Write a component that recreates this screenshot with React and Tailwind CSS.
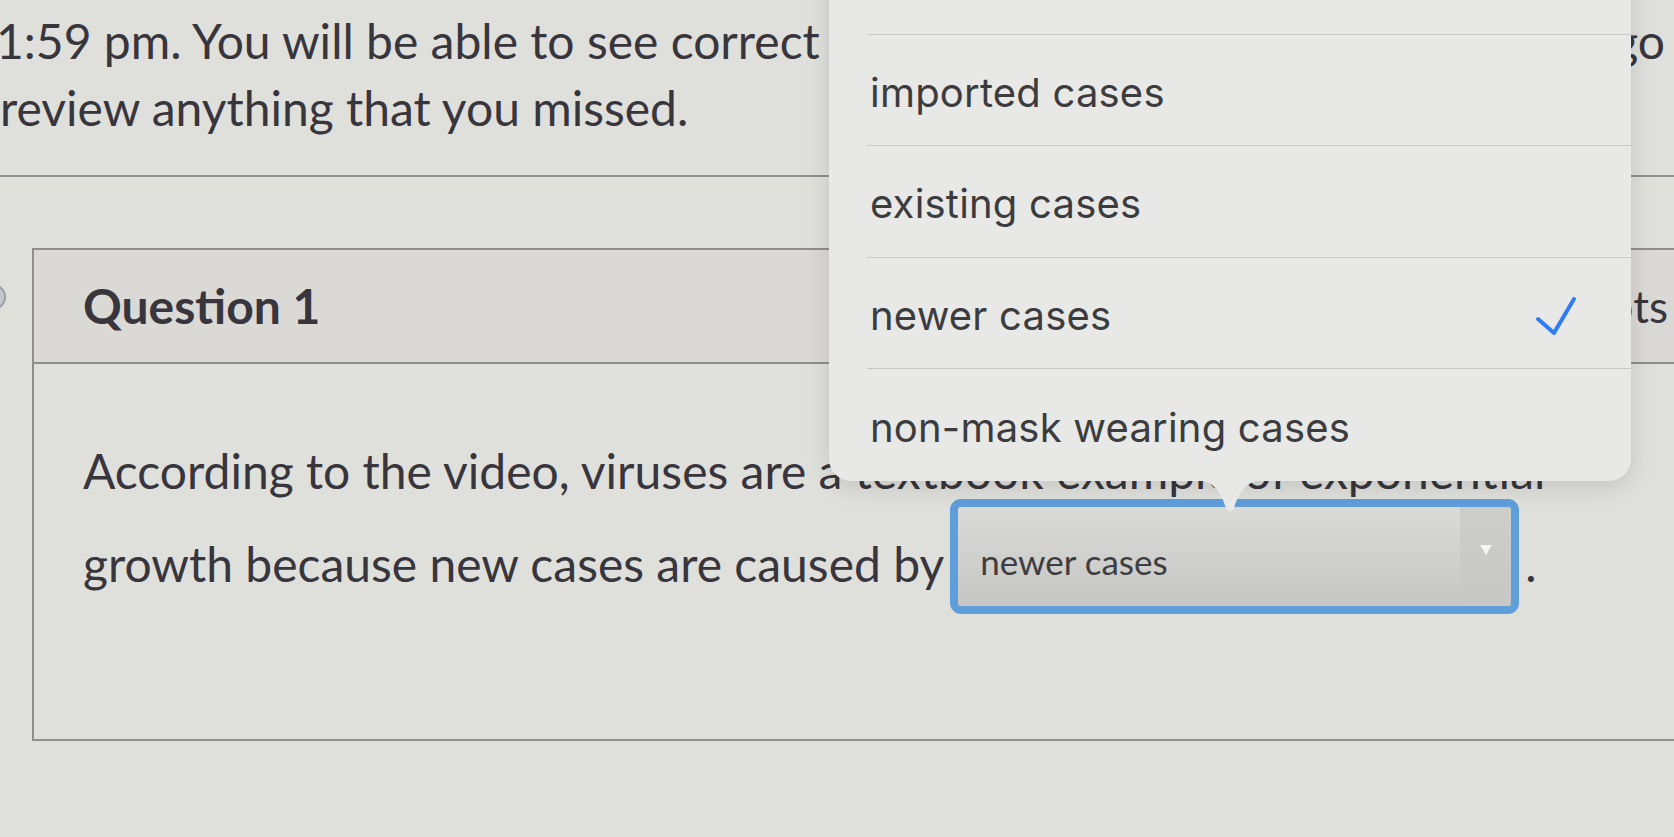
import React from "react";

const options = ["[ Select ]", "imported cases", "existing cases", "newer cases", "non-mask wearing cases"];

function Check() {
  return (
    <svg width="44" height="40" viewBox="0 0 44 40" fill="none">
      <path d="M4 23 L20 37 L40 3" stroke="#2f7cf6" strokeWidth="4" strokeLinecap="round" strokeLinejoin="round" />
    </svg>
  );
}

function Popover({ selected }) {
  return (
    <div className="absolute left-[829px] top-[-77px] w-[802px] font-['Inter',sans-serif]">
      <div className="rounded-[22px] bg-[#e8e8e6] shadow-[0_6px_24px_rgba(0,0,0,0.12)]">
        {options.map((opt, i) => (
          <div key={opt} className="h-[111.5px] pl-[38px]">
            <div
              className={
                "flex h-full items-center justify-between pl-[3px] pr-[53px] pt-[6px] " +
                (i < options.length - 1 ? "border-b border-[#c8c8c6]" : "")
              }
            >
              <span className="text-[40px] tracking-[0.2px] text-[#3c3c3e]">{opt}</span>
              {opt === selected && <Check />}
            </div>
          </div>
        ))}
      </div>
      {/* arrow pointing to the select */}
      <svg className="ml-[366px] -mt-[1px]" width="70" height="34" viewBox="0 0 70 34">
        <path d="M0 0 C15 0 25 8 31 28 Q35 35 39 28 C45 8 55 0 70 0 Z" fill="#e8e8e6" />
      </svg>
    </div>
  );
}

export default function App() {
  return (
    <div className="relative h-[837px] w-[1674px] overflow-hidden bg-[#dfdfdc] font-['Lato',sans-serif] text-[#38363c]">
      <div className="pt-[7px] text-[48px] leading-[67px]">
        <div className="flex justify-between">
          <span className="-ml-[4px]">1:59 pm. You will be able to see correct</span>
          <span className="mr-[9px]">ago</span>
        </div>
        <div>review anything that you missed.</div>
      </div>

      <div className="mt-[34px] h-[2px] bg-[#8f8f8f]" />

      <div className="mt-[71px] flex">
        <div className="w-[32px] shrink-0">
          <div className="-ml-[20px] mt-[36px] h-[26px] w-[26px] rounded-full border-2 border-[#9aa0a8] bg-[#c3c6cb]" />
        </div>
        <div className="w-[1680px] shrink-0 border-2 border-r-0 border-[#8e8e8e]">
          <div className="flex h-[114px] items-center justify-between border-b-2 border-[#8e8e8e] bg-[#dad9d6] pl-[49px] pr-[44px]">
            <span className="text-[48px] font-bold">Question 1</span>
            <span className="text-[44px]">1 pts</span>
          </div>
          <div className="h-[375px] pl-[49px] pt-[79px] text-[48px] leading-[56px]">
            <div>According to the video, viruses are a textbook example of exponential</div>
            <div className="flex items-start">
              <span className="mt-[37px]">growth because new cases are caused by</span>
              <div className="ml-[6px] h-[115px] w-[569px] shrink-0 rounded-[11px] border-[8px] border-[#5e9edb] bg-[#d6d6d4]">
                <div className="flex h-full overflow-hidden rounded-[4px] bg-gradient-to-b from-[#dadad8] to-[#c6c6c4]">
                  <div className="flex flex-1 items-center pl-[22px] pt-[8px] text-[35px] text-[#3e3d41]">newer cases</div>
                  <div className="flex w-[51px] items-start justify-center bg-[#c8c8c6]/70 pt-[38px]">
                    <svg width="12" height="10" viewBox="0 0 12 10">
                      <path d="M0 0 H12 L6 10 Z" fill="#f4f4f4" />
                    </svg>
                  </div>
                </div>
              </div>
              <span className="ml-[6px] mt-[37px]">.</span>
            </div>
          </div>
        </div>
      </div>

      <Popover selected="newer cases" />
    </div>
  );
}
